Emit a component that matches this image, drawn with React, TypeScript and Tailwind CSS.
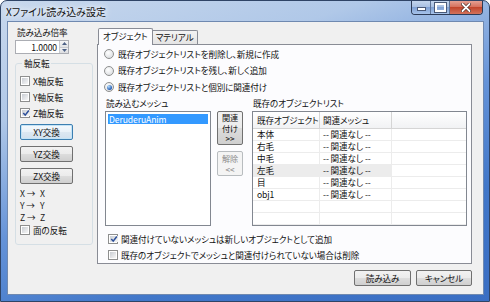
import React from 'react'

function CheckBox({ checked = false, label }: { checked?: boolean; label: string }) {
  return (
    <div className="flex items-center gap-[3px] h-[12px]">
      <span className="w-[10px] h-[10px] border border-[#8e8f8f] bg-white p-px shrink-0 flex">
        <span className="flex-1 flex items-center justify-center bg-[linear-gradient(135deg,#c9cdd3,#f7f7f7)]">
          {checked && (
            <svg viewBox="0 0 8 8" className="w-[8px] h-[8px]">
              <path d="M1.3 4.1 L3.2 6.2 L6.8 1.5" fill="none" stroke="#2b4e9a" strokeWidth="1.5" />
            </svg>
          )}
        </span>
      </span>
      <span className="whitespace-nowrap">{label}</span>
    </div>
  )
}

function Radio({ checked = false, label }: { checked?: boolean; label: string }) {
  return (
    <div className="flex items-center gap-[4px] h-[12px]">
      <span className="w-[10px] h-[10px] rounded-full border border-[#8e8f8f] bg-[radial-gradient(circle_at_40%_35%,#ffffff,#d3d6da)] flex items-center justify-center shrink-0">
        {checked && (
          <span className="w-[5px] h-[5px] rounded-full bg-[radial-gradient(circle_at_35%_30%,#b4dcfd,#1d56b0_75%)]" />
        )}
      </span>
      <span className="whitespace-nowrap">{label}</span>
    </div>
  )
}

function Btn({
  children,
  focused = false,
  disabled = false,
  className = '',
}: {
  children: React.ReactNode
  focused?: boolean
  disabled?: boolean
  className?: string
}) {
  let look = 'border-[#707070] bg-[linear-gradient(#f2f2f2_0%,#ebebeb_50%,#dddddd_50%,#cfcfcf_100%)]'
  if (focused) look = 'border-[#3c7fb1] bg-[linear-gradient(#f4f9fd_0%,#e8f1f8_50%,#dce8f2_50%,#d2e1ee_100%)] shadow-[inset_0_0_0_1px_#c4e3f6]'
  if (disabled) look = 'border-[#b8bcbf] bg-[#f4f4f4] text-[#8d8d8d]'
  return (
    <div className={`rounded-[2px] border flex flex-col items-center justify-center whitespace-nowrap ${look} ${className}`}>
      {children}
    </div>
  )
}

const objects = ['本体', '右毛', '中毛', '左毛', '目', 'obj1', '', '']

export default function App() {
  return (
    <div className="w-[490px] h-[302px] flex flex-col pl-[6px] pr-[5px] pb-[6px] rounded-t-[7px] border border-[#2f4466] overflow-hidden bg-[linear-gradient(162deg,#c8d8ed_0%,#b0c8e8_26%,#6593d8_52%,#4177c9_75%,#3a6ec3_100%)] font-['Noto_Sans_CJK_JP',sans-serif] [font-feature-settings:'palt'] text-[8.6px] tracking-[-0.1px] leading-none text-[#111]">
      {/* title bar */}
      <div className="h-[20px] flex items-start justify-between shrink-0">
        <div className="mt-[5px] -ml-px text-[10px] tracking-normal leading-[12px] [text-shadow:0_0_5px_#fff,0_0_8px_#fff]">Xファイル読み込み設定</div>
        <div className="flex -mt-px mr-[1px] h-[15px] border border-t-0 border-[#2c3b57] rounded-b-[4px] overflow-hidden">
          <div className="w-[19px] flex items-center justify-center bg-[linear-gradient(#c7d8ef_0%,#a8c0e2_50%,#7d9fd3_50%,#a7c3ea_100%)] border-r border-[#5d7397]">
            <span className="w-[7px] h-[2px] mt-[4px] bg-white border border-[#4a5a78] box-content" />
          </div>
          <div className="w-[19px] flex items-center justify-center bg-[linear-gradient(#c7d8ef_0%,#a8c0e2_50%,#7d9fd3_50%,#a7c3ea_100%)] border-r border-[#5d7397]">
            <span className="w-[7px] h-[5px] border-2 border-white outline outline-1 outline-[#4a5a78] box-content" />
          </div>
          <div className="w-[32px] flex items-center justify-center bg-[linear-gradient(#e6a89c_0%,#d6705c_50%,#c1432a_50%,#d2735c_100%)]">
            <svg viewBox="0 0 10 9" className="w-[10px] h-[9px]">
              <path d="M1.5 1 L8.5 8 M8.5 1 L1.5 8" stroke="#4a2a24" strokeWidth="3.2" strokeLinecap="round" />
              <path d="M1.5 1 L8.5 8 M8.5 1 L1.5 8" stroke="#ffffff" strokeWidth="1.8" strokeLinecap="round" />
            </svg>
          </div>
        </div>
      </div>

      {/* client */}
      <div className="flex-1 flex flex-col border border-[#6f89b0] bg-[#f0f0f0]">
        <div className="flex pl-[7px] gap-[4px]">
          {/* left column */}
          <div className="w-[78px] flex flex-col pt-[4px]">
            <div className="h-[12px] leading-[12px] pl-[2px]">読み込み倍率</div>
            <div className="mt-[2px] flex h-[14px] w-[54px] border border-[#abadb3] bg-white">
              <div className="flex-1 text-right pr-[2px] leading-[12px]">1.0000</div>
              <div className="w-[9px] flex flex-col border-l border-[#c8cbd0]">
                <div className="flex-1 flex items-center justify-center bg-[linear-gradient(#f7f7f7,#e2e3e5)] border-b border-[#c8cbd0]">
                  <svg viewBox="0 0 5 3" className="w-[5px] h-[3px]"><path d="M0 3 L2.5 0 L5 3 Z" fill="#4d6185" /></svg>
                </div>
                <div className="flex-1 flex items-center justify-center bg-[linear-gradient(#f1f1f2,#dcdde0)]">
                  <svg viewBox="0 0 5 3" className="w-[5px] h-[3px]"><path d="M0 0 L2.5 3 L5 0 Z" fill="#4d6185" /></svg>
                </div>
              </div>
            </div>
            <fieldset className="mt-[3px] border border-[#d5dfe5] rounded-[3px] px-[4px] pb-[8px]">
              <legend className="ml-[2px] px-[2px] h-[12px] leading-[12px]">軸反転</legend>
              <div className="flex flex-col gap-[4px] pt-[6px]">
                <CheckBox label="X軸反転" />
                <CheckBox label="Y軸反転" />
                <CheckBox checked label="Z軸反転" />
              </div>
              <div className="flex flex-col gap-[6px] mt-[5px]">
                <Btn focused className="w-[53px] h-[16px]">XY交換</Btn>
                <Btn className="w-[53px] h-[16px]">YZ交換</Btn>
                <Btn className="w-[53px] h-[16px]">ZX交換</Btn>
              </div>
              <div className="flex flex-col mt-[3px] text-[#222]">
                {['X', 'Y', 'Z'].map((a) => (
                  <div key={a} className="h-[12px] leading-[12px] flex">
                    <span className="w-[20px]">{a} →</span>
                    <span>{a}</span>
                  </div>
                ))}
              </div>
              <div className="mt-[1px]">
                <CheckBox label="面の反転" />
              </div>
            </fieldset>
          </div>

          {/* tab control */}
          <div className="w-[375px] flex flex-col pt-[6px]">
            <div className="flex items-end h-[16px] pl-[1px]">
              <div className="h-[17px] -mb-px px-[4px] leading-[14px] border border-b-0 border-[#898c95] rounded-t-[2px] bg-[#fcfcfe] relative z-10">オブジェクト</div>
              <div className="h-[14px] px-[3px] leading-[13px] border border-l-0 border-b-0 border-[#898c95] rounded-tr-[2px] bg-[linear-gradient(#f3f3f3,#e4e4e4)]">マテリアル</div>
            </div>
            <div className="h-[220px] border border-[#898c95] bg-[#fcfcfe] flex flex-col">
              <div className="flex flex-col gap-[4.5px] pt-[3px] pl-[6px]">
                <Radio label="既存オブジェクトリストを削除し、新規に作成" />
                <Radio label="既存オブジェクトリストを残し、新しく追加" />
                <Radio checked label="既存オブジェクトリストと個別に関連付け" />
              </div>

              <div className="flex mt-[4px] pl-[7px]">
                <div className="flex flex-col w-[106px]">
                  <div className="h-[12px] leading-[12px] pl-[1px]">読み込むメッシュ</div>
                  <div className="mt-[2px] h-[115px] border border-[#828790] bg-white p-[2px]">
                    <div className="h-[10px] leading-[10px] pl-[1px] bg-[#3399ff] text-white">DeruderuAnim</div>
                  </div>
                </div>
                <div className="flex flex-col gap-[6px] ml-[6px] mt-[14px]">
                  <Btn className="w-[26px] h-[34px] leading-[10.5px] text-[8.2px]">
                    <span>関連</span>
                    <span>付け</span>
                    <span>&gt;&gt;</span>
                  </Btn>
                  <Btn disabled className="w-[26px] h-[25px] leading-[10.5px] text-[8.2px]">
                    <span>解除</span>
                    <span>&lt;&lt;</span>
                  </Btn>
                </div>
                <div className="flex flex-col ml-[9px]">
                  <div className="h-[12px] leading-[12px] pl-[1px]">既存のオブジェクトリスト</div>
                  <div className="mt-[2px] w-[215px] h-[115px] border border-[#828790] bg-white flex flex-col overflow-hidden">
                    <div className="flex h-[17px] shrink-0 border-b border-[#d5d5d5] bg-[linear-gradient(#ffffff,#f1f2f4)] whitespace-nowrap">
                      <div className="w-[67px] border-r border-[#d5d5d5] pl-[4px] flex items-center overflow-hidden">既存オブジェクト</div>
                      <div className="w-[72px] border-r border-[#d5d5d5] pl-[3px] flex items-center overflow-hidden">関連メッシュ</div>
                      <div className="flex-1" />
                    </div>
                    {objects.map((o, i) => (
                      <div key={i} className="flex h-[12px] shrink-0 border-b border-[#ececec] leading-[11px] whitespace-nowrap">
                        <div className={`w-[67px] border-r border-[#ececec] pl-[4px] ${o === '左毛' ? 'bg-[#ececec]' : ''}`}>{o}</div>
                        <div className={`w-[72px] border-r border-[#ececec] pl-[3px] ${o === '左毛' ? 'bg-[#ececec]' : ''}`}>{o ? '-- 関連なし --' : ''}</div>
                        <div className="flex-1" />
                      </div>
                    ))}
                  </div>
                </div>
              </div>

              <div className="flex flex-col gap-[4px] mt-[7px] pl-[10px]">
                <CheckBox checked label="関連付けていないメッシュは新しいオブジェクトとして追加" />
                <CheckBox label="既存のオブジェクトでメッシュと関連付けられていない場合は削除" />
              </div>
            </div>
          </div>
        </div>

        {/* bottom buttons */}
        <div className="flex justify-end gap-[5px] mt-[6px] pr-[11px]">
          <Btn className="w-[57px] h-[16px]">読み込み</Btn>
          <Btn className="w-[56px] h-[16px]">キャンセル</Btn>
        </div>
      </div>
    </div>
  )
}
